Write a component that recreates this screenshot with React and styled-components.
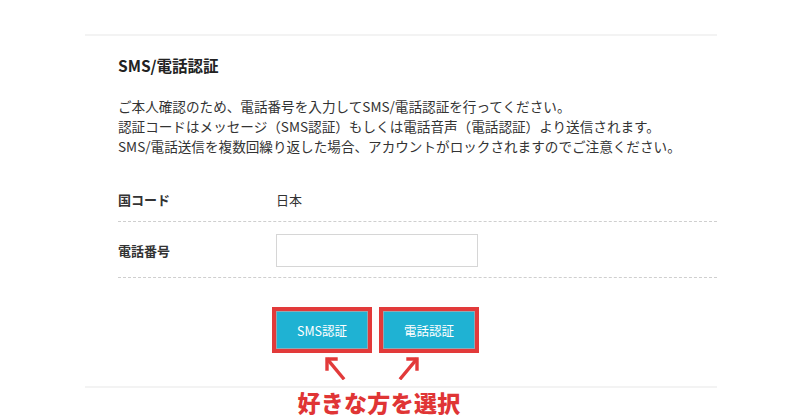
import React from "react";
import styled, { createGlobalStyle } from "styled-components";

const GlobalStyle = createGlobalStyle`
  html, body {
    margin: 0;
    padding: 0;
    background: #ffffff;
  }
  body {
    font-family: "Noto Sans CJK JP", "Noto Sans", sans-serif;
    color: #333333;
  }
`;

const Page = styled.div`
  width: 800px;
  height: 420px;
  padding-top: 34px;
  box-sizing: border-box;
  overflow: hidden;
`;

const Panel = styled.section`
  width: 632px;
  margin-left: 85px;
  border-top: 2px solid #f3f3f3;
  border-bottom: 2px solid #f3f3f3;
  padding: 18px 0 6px 33px;
  box-sizing: border-box;
`;

const Title = styled.h2`
  margin: 0;
  font-size: 15.5px;
  font-weight: 700;
  line-height: 22px;
  color: #222222;
`;

const Lead = styled.p`
  margin: 20px 0 0;
  font-size: 13.6px;
  line-height: 20px;
  color: #333333;
`;

const Table = styled.div`
  margin-top: 21px;
`;

const Row = styled.div`
  display: flex;
  align-items: center;
  height: ${(p) => p.h}px;
  border-bottom: 1px dashed #cfcfcf;
  padding-top: ${(p) => p.pt || 0}px;
  box-sizing: border-box;
`;

const Label = styled.div`
  width: 158px;
  font-size: 13px;
  font-weight: 700;
  color: #333333;
`;

const Value = styled.div`
  font-size: 13px;
  color: #333333;
`;

const Input = styled.input`
  width: 202px;
  height: 33px;
  border: 1px solid #d6d6d6;
  box-sizing: border-box;
  background: #fff;
  outline: none;
`;

const Buttons = styled.div`
  display: flex;
  gap: 15px;
  margin-top: 33px;
  margin-left: 158px;
`;

const Button = styled.button`
  width: 92px;
  height: 38px;
  background: #1fb2d3;
  border: 1px solid #8fa9b3;
  color: #ffffff;
  font-family: "Noto Sans CJK JP", "Noto Sans", sans-serif;
  font-size: 12.5px;
  outline: 4px solid #e23a3a;
  outline-offset: 0;
  cursor: pointer;
`;

const Arrows = styled.div`
  display: flex;
  gap: 52px;
  margin-left: 206px;
  margin-top: 7px;
  height: 24px;
`;

const Note = styled.div`
  text-align: center;
  margin-left: -42px;
  margin-top: 1px;
  font-size: 23px;
  font-weight: 900;
  letter-spacing: 0.3px;
  color: #e03535;
  line-height: 26px;
`;

const Arrow = ({ dir }) => (
  <svg width="22" height="24" viewBox="0 0 22 24">
    <g
      transform={dir === "left" ? "" : "translate(22 0) scale(-1 1)"}
      stroke="#e23a3a"
      strokeWidth="3.4"
      fill="none"
      strokeLinecap="square"
    >
      <path d="M19 22 L4 4" />
      <path d="M3 13 L3 3 L12 3" />
    </g>
  </svg>
);

export default function App() {
  return (
    <>
      <GlobalStyle />
      <Page>
        <Panel>
          <Title>SMS/電話認証</Title>
          <Lead>
            ご本人確認のため、電話番号を入力してSMS/電話認証を行ってください。
            <br />
            認証コードはメッセージ（SMS認証）もしくは電話音声（電話認証）より送信されます。
            <br />
            SMS/電話送信を複数回繰り返した場合、アカウントがロックされますのでご注意ください。
          </Lead>
          <Table>
            <Row h={45}>
              <Label>国コード</Label>
              <Value>日本</Value>
            </Row>
            <Row h={56} pt={1}>
              <Label>電話番号</Label>
              <Input type="text" />
            </Row>
          </Table>
          <Buttons>
            <Button>SMS認証</Button>
            <Button>電話認証</Button>
          </Buttons>
          <Arrows>
            <Arrow dir="left" />
            <Arrow dir="right" />
          </Arrows>
        </Panel>
        <Note>好きな方を選択</Note>
      </Page>
    </>
  );
}
